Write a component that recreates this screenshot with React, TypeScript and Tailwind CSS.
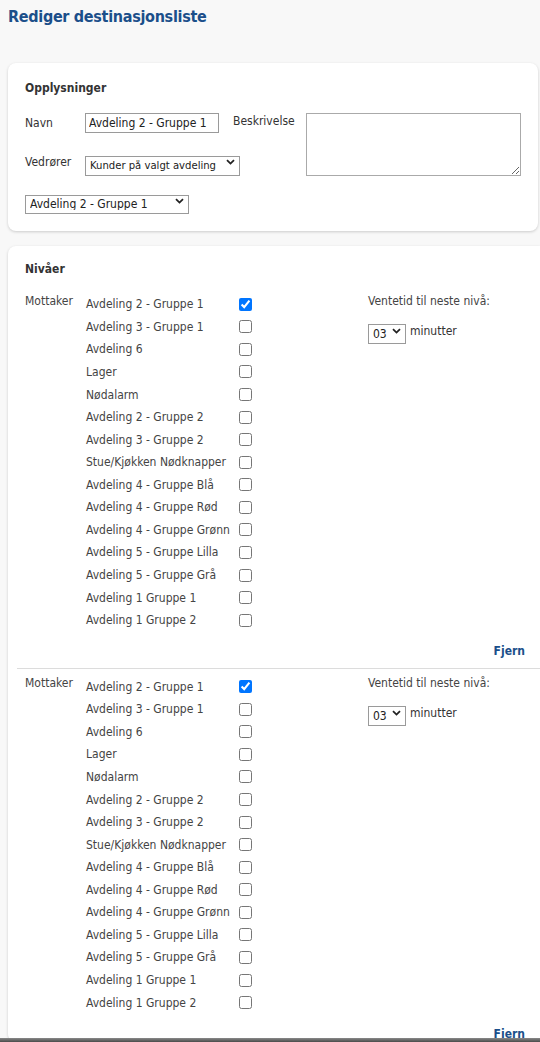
import React from "react";

const RECIPIENTS = [
  "Avdeling 2 - Gruppe 1",
  "Avdeling 3 - Gruppe 1",
  "Avdeling 6",
  "Lager",
  "Nødalarm",
  "Avdeling 2 - Gruppe 2",
  "Avdeling 3 - Gruppe 2",
  "Stue/Kjøkken Nødknapper",
  "Avdeling 4 - Gruppe Blå",
  "Avdeling 4 - Gruppe Rød",
  "Avdeling 4 - Gruppe Grønn",
  "Avdeling 5 - Gruppe Lilla",
  "Avdeling 5 - Gruppe Grå",
  "Avdeling 1 Gruppe 1",
  "Avdeling 1 Gruppe 2",
];

const font = { fontFamily: '"DejaVu Sans Condensed", "DejaVu Sans", sans-serif' };

function Chevron() {
  return (
    <svg width="9" height="6" viewBox="0 0 9 6" className="pointer-events-none absolute right-[5px] top-1/2 -translate-y-1/2">
      <path d="M1 1.2 4.5 4.6 8 1.2" fill="none" stroke="#222" strokeWidth="1.8" />
    </svg>
  );
}

function Select({ value, className, text = "text-[12px]" }: { value: string; className: string; text?: string }) {
  return (
    <div className={"relative " + className}>
      <select
        defaultValue={value}
        className={"h-full w-full appearance-none border border-[#9a9a9a] bg-white pl-[4px] pr-[14px] leading-none text-[#222] " + text}
      >
        <option>{value}</option>
      </select>
      <Chevron />
    </div>
  );
}

function Level() {
  return (
    <div className="pl-[8px]">
      <div className="flex">
        <div className="w-[61px] text-[12px] leading-[16px] text-[#444]">Mottaker</div>
        <ul className="w-[282px]">
          {RECIPIENTS.map((name, i) => (
            <li key={name} className="flex h-[22.57px] items-center">
              <span className="w-[153px] text-[12px] text-[#444]">{name}</span>
              <input type="checkbox" defaultChecked={i === 0} className="m-0 h-[13px] w-[13px]" />
            </li>
          ))}
        </ul>
        <div>
          <div className="text-[12px] leading-[16px] text-[#444]">Ventetid til neste nivå:</div>
          <div className="mt-[12px] flex items-center gap-[4px]">
            <Select value="03" className="h-[20px] w-[38px]" />
            <span className="text-[12px] text-[#333]">minutter</span>
          </div>
        </div>
      </div>
      <div className="mt-[12px] pr-[15px] text-right text-[12px] font-bold leading-[16px] text-[#1b4f8a]">Fjern</div>
    </div>
  );
}

export default function App() {
  return (
    <div style={font} className="flex h-[1042px] flex-col overflow-hidden bg-[#f8f8f8]">
      <div className="flex-1 overflow-hidden">
        <h1 className="px-2 pt-[6px] text-[16px] font-bold leading-[22px] tracking-[-0.3px] text-[#1b4f8a]">
          Rediger destinasjonsliste
        </h1>

        <section className="ml-2 mr-[2px] mt-[35px] rounded-lg bg-white px-[17px] pb-[21px] pt-[16px] shadow-[0_1px_3px_rgba(0,0,0,0.18)]">
          <h2 className="text-[12px] font-bold text-[#333]">Opplysninger</h2>
          <div className="mt-[16px] flex items-start">
            <div className="grid grid-cols-[60px_148px_73px] grid-rows-[20px_20px] items-center gap-y-[19px]">
              <span className="text-[12px] leading-[16px] text-[#333]">Navn</span>
              <input
                defaultValue="Avdeling 2 - Gruppe 1"
                className="h-[20px] w-[134px] border border-[#9a9a9a] px-[3px] text-[12px] leading-[16px] text-[#222]"
              />
              <span className="self-start text-[12px] leading-[16px] text-[#333]">Beskrivelse</span>
              <span className="text-[12px] leading-[16px] text-[#333]">Vedrører</span>
              <Select value="Kunder på valgt avdeling" className="col-span-2 h-[20px] w-[155px]" text="text-[11.2px]" />
            </div>
            <textarea className="h-[63px] w-[219px] border border-[#aaa]" />
          </div>
          <Select value="Avdeling 2 - Gruppe 1" className="mt-[15px] h-[19px] w-[164px]" />
        </section>

        <section className="ml-2 mt-[15px] rounded-l-lg bg-white pl-[9px] pt-[14px] shadow-[0_1px_3px_rgba(0,0,0,0.18)]">
          <h2 className="pl-[8px] text-[12px] font-bold text-[#333]">Nivåer</h2>
          <div className="mt-[15px]">
            <Level />
          </div>
          <div className="mt-[9px] border-t border-[#dcdcdc] pt-[6px]">
            <Level />
          </div>
        </section>
      </div>
      <div className="h-[4px] bg-gradient-to-b from-[#8a8a8a] to-[#4a4a4a]" />
    </div>
  );
}
